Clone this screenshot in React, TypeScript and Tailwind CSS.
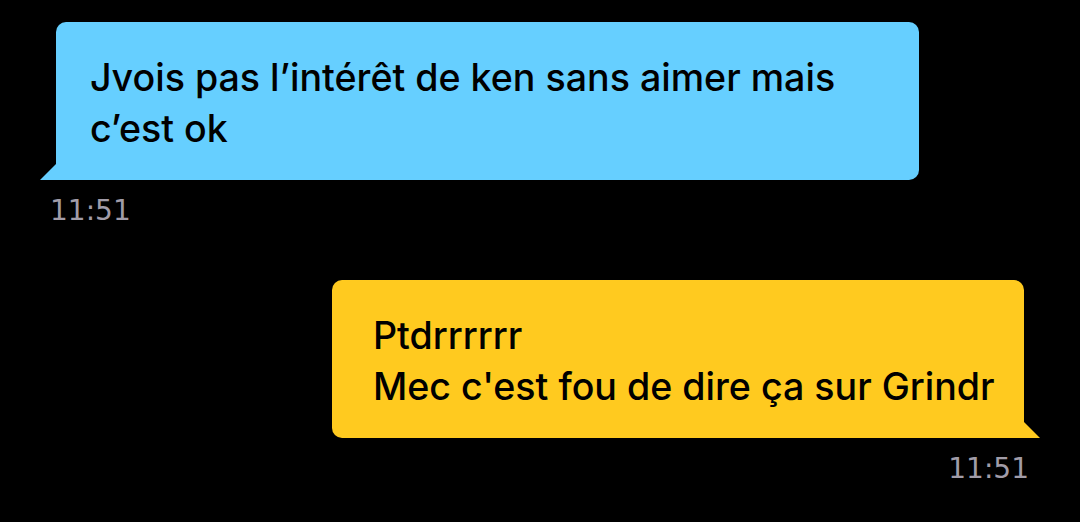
import React from "react";

export default function App() {
  return (
    <div
      className="w-[1080px] h-[522px] bg-black overflow-hidden flex flex-col"
      style={{ fontFamily: 'Inter, "Open Sans", sans-serif' }}
    >
      <div className="ml-[56px] mt-[22px] relative w-[863px]">
        <div className="bg-[#66cfff] rounded-[10px] rounded-bl-none pl-[34px] pr-[10px] pt-[30px] pb-[26px] text-[37.6px] leading-[51px] font-medium text-black whitespace-nowrap">
          Jvois pas l’intérêt de ken sans aimer mais
          <br />
          c’est ok
        </div>
        <svg className="absolute left-[-16px] bottom-0" width="16" height="16" viewBox="0 0 16 16">
          <polygon points="0,16 16,16 16,0" fill="#66cfff" />
        </svg>
      </div>
      <div
        className="ml-[50px] mt-[15px] text-[28px] leading-[32px] text-[#a19ca8]"
        style={{ fontFamily: '"DejaVu Sans", sans-serif' }}
      >
        11:51
      </div>

      <div className="self-end mr-[56px] mt-[53px] relative w-[692px]">
        <div className="bg-[#ffca1f] rounded-[10px] rounded-br-none pl-[41px] pr-[10px] pt-[30px] pb-[26px] text-[37.6px] leading-[51px] font-medium text-black whitespace-nowrap">
          <div>Ptdrrrrrr</div>
          <div>Mec c'est fou de dire ça sur Grindr</div>
        </div>
        <svg className="absolute right-[-16px] bottom-0" width="16" height="16" viewBox="0 0 16 16">
          <polygon points="0,0 16,16 0,16" fill="#ffca1f" />
        </svg>
      </div>
      <div
        className="self-end mr-[51px] mt-[15px] text-[28px] leading-[32px] text-[#a19ca8]"
        style={{ fontFamily: '"DejaVu Sans", sans-serif' }}
      >
        11:51
      </div>
    </div>
  );
}
